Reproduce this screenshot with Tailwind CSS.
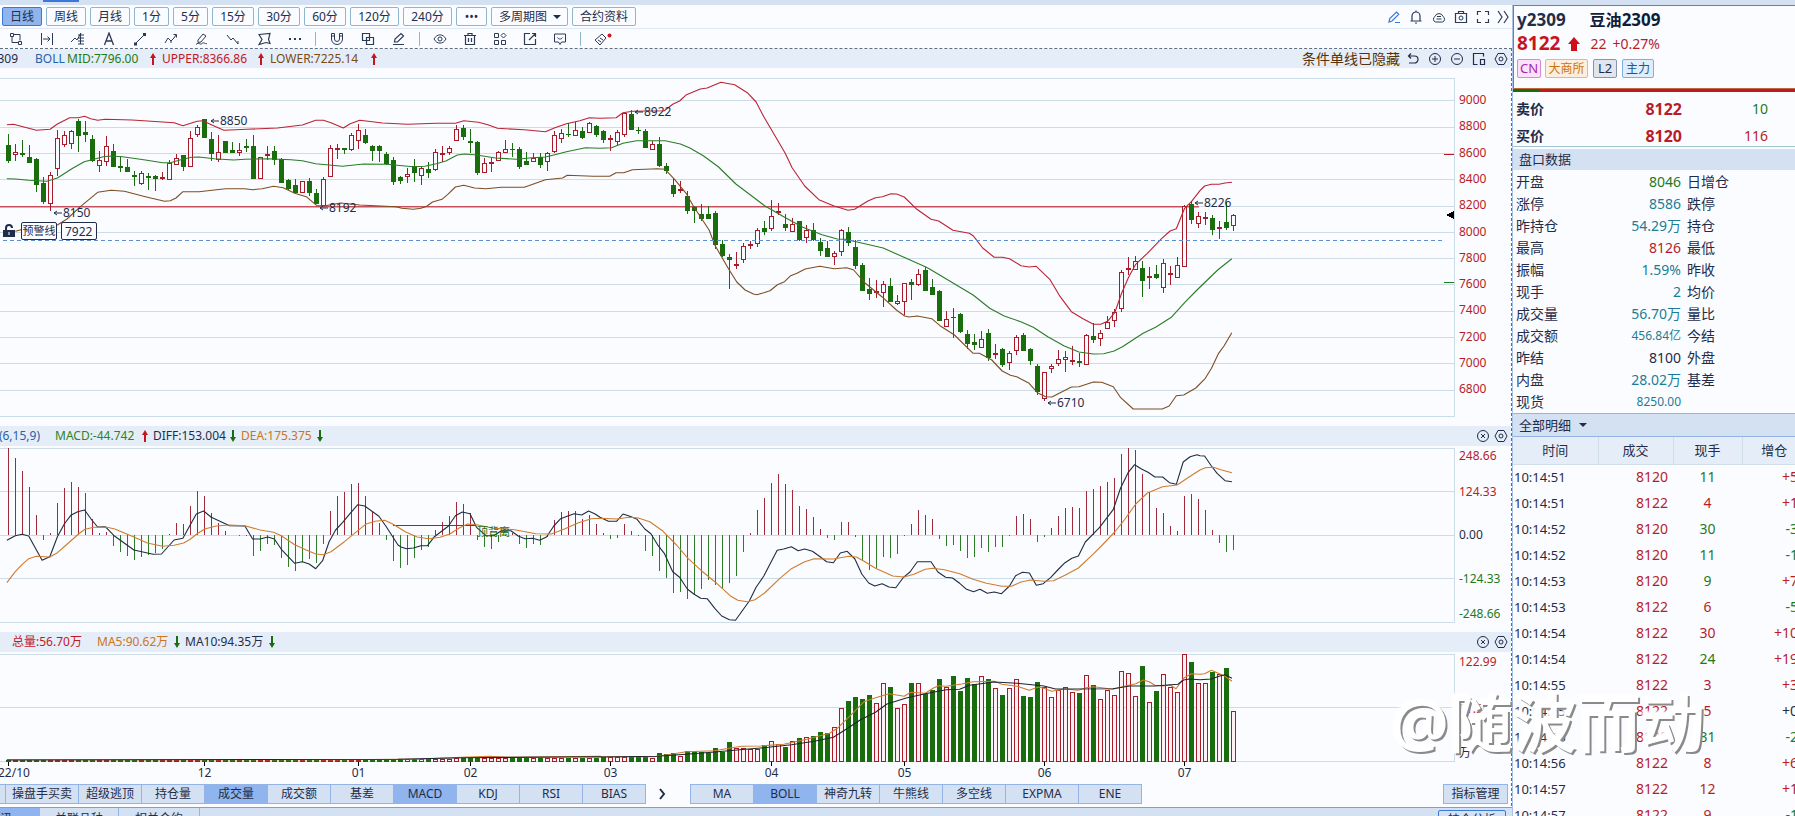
<!DOCTYPE html>
<html lang="zh-CN">
<head>
<meta charset="utf-8">
<title>豆油2309</title>
<script src="https://cdn.jsdelivr.net/npm/@tailwindcss/browser@4"></script>
</head>
<body class="h-screen overflow-hidden bg-[#fbfcff] font-['Noto_Sans','Noto_Sans_CJK_SC',sans-serif] text-xs text-[#1f2d4a]">
<svg class="hidden">
  <symbol id="up" viewBox="0 0 6 12"><path d="M3 0 6 5H4v7H2V5H0z" fill="#c8141e"/></symbol>
  <symbol id="down" viewBox="0 0 6 12"><path d="M3 12 6 7H4V0H2v7H0z" fill="#1a6d0d"/></symbol>
  <symbol id="hex" viewBox="0 0 14 14"><path d="M4 1.500h6L13 7l-3 5.500H4L1 7z"/><circle cx="7" cy="7" r="2"/></symbol>
  <symbol id="close" viewBox="0 0 14 14"><circle cx="7" cy="7" r="5.500"/><path d="m5 5 4 4m0-4-4 4"/></symbol>
</svg>
<div class="flex h-full flex-col">
  <div class="h-[5px] shrink-0 bg-[#d3e1f2] pl-[43px]"><div class="h-[2px] w-9 bg-[#3b78d8]"></div></div>
  <div class="flex min-h-0 flex-1">
    <main class="flex min-w-0 flex-1 flex-col">
      <div class="flex h-6 shrink-0 items-center justify-between border-b border-[#dfe9f5] pl-0.5">
        <nav id="periods" class="flex gap-1"></nav>
        <div class="flex text-[#2b3a55]">
          <button class="flex w-[22px] justify-center text-[#3b78d8]" aria-label="画线"><svg class="size-3.5 fill-none stroke-current" viewBox="0 0 14 14"><path d="m2 12 .8-3.500L9.500 2l2.300 2.300L5 11zM8 12.500h5" stroke-width="1.200"/></svg></button>
          <button class="flex w-[22px] justify-center" aria-label="提醒"><svg class="size-3.5 fill-none stroke-current" viewBox="0 0 14 14"><path d="M1.500 11h11M3 11V6a4 4 0 0 1 8 0v5M6 13h2M7 2V.5" stroke-width="1.200"/></svg></button>
          <button class="flex w-[23px] justify-center" aria-label="云"><svg class="size-3.5 fill-none stroke-current" viewBox="0 0 14 14"><path d="M3.500 12a3 3 0 0 1-.5-5.500 4.200 4.200 0 0 1 8 0 3 3 0 0 1-.5 5.500zM5 6.500h4M4.500 9h5"/></svg></button>
          <button class="flex w-[22px] justify-center" aria-label="截图"><svg class="size-3.5 fill-none stroke-current" viewBox="0 0 14 14"><path d="M1.500 3.500h11v9h-11zM4.500 3.500v-2h5v2" stroke-width="1.200"/><circle cx="7" cy="8" r="2"/></svg></button>
          <button class="flex w-[22px] justify-center" aria-label="全屏"><svg class="size-3.5 fill-none stroke-current" viewBox="0 0 14 14"><path d="M1.500 5V1.500H5M9 1.500h3.500V5M12.500 9v3.500H9M5 12.500H1.500V9" stroke-width="1.200"/></svg></button>
          <button class="flex w-[18px] justify-center" aria-label="展开"><svg class="size-3.5 fill-none stroke-current" viewBox="0 0 14 14"><path d="m2 1 4 6-4 6M8 1l4 6-4 6" stroke-width="1.200"/></svg></button>
        </div>
      </div>
      <div id="tools" class="flex h-[19px] shrink-0 items-center text-[#2b3a55]"></div>
      <div class="flex min-h-0 flex-1 flex-col border-t border-r border-dashed border-[#5f6f82]">
        <div class="flex h-[19px] shrink-0 items-center bg-[#e5edf8]">
          <span class="flex w-[18px] justify-end overflow-hidden">y2309</span>
          <span class="ml-[17px] w-8 text-[#2b5fa8]">BOLL</span>
          <span class="w-[83px] text-[#1f7a1a]">MID:7796.00</span>
          <svg class="h-3 w-1.5"><use href="#up"/></svg>
          <span class="ml-1.5 w-[96px] text-[#c01824]">UPPER:8366.86</span>
          <svg class="h-3 w-1.5"><use href="#up"/></svg>
          <span class="ml-1.5 w-[101px] text-[#7a4a14]">LOWER:7225.14</span>
          <svg class="h-3 w-1.5"><use href="#up"/></svg>
          <span class="ml-auto mr-0.5 text-sm leading-none text-[#5a3208]">条件单线已隐藏</span>
          <button class="flex w-[22px] justify-center" aria-label="撤销"><svg class="size-3.5 fill-none stroke-current" viewBox="0 0 14 14"><path d="M5 1.500 2.500 4 5 6.500M2.500 4h6a3.500 3.500 0 0 1 0 7H3" stroke-width="1.200"/></svg></button>
          <button class="flex w-[22px] justify-center" aria-label="放大"><svg class="size-3.5 fill-none stroke-current" viewBox="0 0 14 14"><circle cx="7" cy="7" r="5.500"/><path d="M4 7h6M7 4v6"/></svg></button>
          <button class="flex w-[22px] justify-center" aria-label="缩小"><svg class="size-3.5 fill-none stroke-current" viewBox="0 0 14 14"><circle cx="7" cy="7" r="5.500"/><path d="M4 7h6"/></svg></button>
          <button class="flex w-[22px] justify-center" aria-label="窗口"><svg class="size-3.5 fill-none stroke-current" viewBox="0 0 14 14"><path d="M5.500 12.500h-4v-11h10v3M8.500 7.500h4v5h-4z" stroke-width="1.200"/></svg></button>
          <button class="flex w-[21px] justify-center" aria-label="设置"><svg class="size-3.5 fill-none stroke-current"><use href="#hex"/></svg></button>
        </div>
        <div class="relative flex h-[358px] shrink-0">
          <svg id="price" class="h-full min-w-0 flex-1 border-0"></svg>
          <svg id="priceAxis" class="h-full w-[56px]"></svg>
          <div class="absolute left-[3px] top-[154px] flex h-[18px] items-center text-[11px]">
            <svg class="h-[14px] w-[18px]" viewBox="0 0 18 14"><path d="M0 6h12v7H0z" fill="#1f2d4a"/><path d="M3 6V4a3 3 0 0 1 6 0" fill="none" stroke="#1f2d4a" stroke-width="2"/><path d="M5.500 8h1v3h-1z" fill="#fff"/></svg>
            <label for="warn" class="h-full w-[36px] rounded-xs border border-[#1f2d4a] bg-[#fbfcff] text-center leading-4 whitespace-nowrap">预警线</label>
            <input id="warn" value="7922" class="ml-1 h-full w-9 rounded-xs border border-[#1f2d4a] bg-[#fbfcff] px-[3px] text-xs">
          </div>
        </div>
        <div class="flex h-5 shrink-0 items-center bg-[#e5edf8]">
          <span class="flex w-10 justify-end overflow-hidden whitespace-nowrap text-[#2b5fa8]">MACD(6,15,9)</span>
          <span class="ml-[15px] w-[87px] text-[#2d8428]">MACD:-44.742</span>
          <svg class="h-3 w-1.5"><use href="#up"/></svg>
          <span class="ml-[5px] w-[77px]">DIFF:153.004</span>
          <svg class="h-3 w-1.5"><use href="#down"/></svg>
          <span class="ml-[5px] w-[76px] text-[#cd7420]">DEA:175.375</span>
          <svg class="h-3 w-1.5"><use href="#down"/></svg>
          <button class="ml-auto flex w-[18px] justify-center" aria-label="关闭"><svg class="size-3.5 fill-none stroke-current"><use href="#close"/></svg></button>
          <button class="mr-px flex w-[18px] justify-center" aria-label="设置"><svg class="size-3.5 fill-none stroke-current"><use href="#hex"/></svg></button>
        </div>
        <div class="flex h-[186px] shrink-0"><svg id="macd" class="h-full min-w-0 flex-1"></svg><svg id="macdAxis" class="h-full w-[56px]"></svg></div>
        <div class="flex h-5 shrink-0 items-center bg-[#e5edf8] pl-3">
          <span class="w-[85px] text-[#c01824]">总量:56.70万</span>
          <span class="w-[77px] text-[#cd7420]">MA5:90.62万</span>
          <svg class="h-3 w-1.5"><use href="#down"/></svg>
          <span class="ml-[5px] w-[84px]">MA10:94.35万</span>
          <svg class="h-3 w-1.5"><use href="#down"/></svg>
          <button class="ml-auto flex w-[18px] justify-center" aria-label="关闭"><svg class="size-3.5 fill-none stroke-current"><use href="#close"/></svg></button>
          <button class="mr-px flex w-[18px] justify-center" aria-label="设置"><svg class="size-3.5 fill-none stroke-current"><use href="#hex"/></svg></button>
        </div>
        <div class="flex h-[132px] shrink-0"><svg id="vol" class="h-full min-w-0 flex-1"></svg><svg id="volAxis" class="h-full w-[56px]"></svg></div>
        <div class="flex h-5 shrink-0 items-stretch pr-[3px]">
          <div id="tabs1" class="flex border-y border-r border-[#93b4e4]"></div>
          <button class="flex w-11 items-center pl-[11px]" aria-label="更多"><svg class="size-3 fill-none stroke-current stroke-2" viewBox="0 0 12 12"><path d="m3 1 4 5-4 5"/></svg></button>
          <div id="tabs2" class="flex border-y border-r border-[#93b4e4]"></div>
          <button class="ml-auto w-[65px] border border-[#93b4e4] bg-[#d3e1f2] leading-none">指标管理</button>
        </div>
      </div>
      <div class="mt-px flex h-[9px] shrink-0 overflow-hidden border-t border-[#7d9fd6] bg-[#d3e1f2]">
        <div class="flex h-[22px] flex-1 items-stretch">
          <button class="flex w-10 items-center justify-start bg-[#8fb4ee] leading-none"><span class="flex w-3 justify-end overflow-hidden whitespace-nowrap">资讯</span></button>
          <button class="w-[79px] border-r border-[#93b4e4]">关联品种</button>
          <button class="w-[81px] border-r border-[#93b4e4]">相关合约</button>
          <button class="ml-auto mr-1.5 mt-0.5 w-[68px] rounded-xs border border-[#3b78d8] leading-none">持仓分析</button>
        </div>
      </div>
    </main>
    <aside class="w-[283px] shrink-0 overflow-hidden border-l border-[#a9c3e4] text-sm">
      <div class="h-[84px] border-2 border-r-0 border-t border-l border-b border-[#c4683c] px-[3px]">
        <div class="flex h-7 items-center gap-6 text-[17px] font-bold"><span>y2309</span><span class="text-[#101c38]"><span class="text-base">豆油</span>2309</span></div>
        <div class="flex h-5 items-center text-[#b81c28]"><b class="text-[19px] text-[#c8141e]">8122</b><svg class="ml-2 mr-2.5 h-4 w-3" viewBox="0 0 12 16"><path d="m6 1 6 7H9v7H3V8H0z" fill="#d01018"/></svg><span>22</span><span class="ml-1.5">+0.27%</span></div>
        <div class="mt-[5px] flex gap-1 text-[13px] leading-none">
          <span class="grid h-[19px] w-6 place-items-center rounded-xs border border-[#d48ad4] bg-[#fbe2fa] text-[#a828a8]">CN</span>
          <span class="grid h-[19px] w-[43px] place-items-center rounded-xs border border-[#e4b888] bg-[#fdeedd] text-xs text-[#c87410]">大商所</span>
          <span class="ml-px grid h-[19px] w-6 place-items-center rounded-xs border border-[#8a94a4] bg-[#e0e5ee]">L2</span>
          <span class="ml-px grid h-[19px] w-8 place-items-center rounded-xs border border-[#7faee0] bg-[#e0edfb] text-xs text-[#1858a0]">主力</span>
        </div>
      </div>
      <div class="flex h-[3px]"><div class="w-[27px] bg-[#1a6d0d]"></div><div class="flex-1 bg-[#b81c28]"></div></div>
      <div class="h-[55px] border-b border-[#a0c4d0] pl-[3px] pt-[3px]">
        <div class="grid h-[27px] grid-cols-[166px_86px] items-center text-right"><span class="flex items-center justify-between font-bold"><span>卖价</span><span class="text-base text-[#b81c28]">8122</span></span><span class="text-[#1f7a1a]">10</span></div>
        <div class="grid h-[27px] grid-cols-[166px_86px] items-center text-right"><span class="flex items-center justify-between font-bold"><span>买价</span><span class="text-base text-[#b81c28]">8120</span></span><span class="text-[#b81c28]">116</span></div>
      </div>
      <div class="mt-0.5 mb-px h-[21px] bg-[#d3e1f2] pl-1.5 text-[13px] leading-[21px]">盘口数据</div>
      <table class="w-full table-fixed"><tbody id="quotes"></tbody></table>
      <div class="relative flex h-6 items-center border-y border-[#93b4e4] bg-[#d3e1f2] pl-1.5 text-[13px]">
        <select aria-label="明细" class="w-[72px] appearance-none bg-transparent"><option>全部明细</option></select>
        <svg class="pointer-events-none absolute left-[66px] h-1 w-2" viewBox="0 0 8 4"><path d="M0 0h8L4 4z" fill="#1f2d4a"/></svg>
      </div>
      <table class="w-[293px] table-fixed">
        <thead><tr class="h-[27px] border-b border-[#d0dfea] bg-[#e5edf8] text-[13px]"><th class="w-[85px] border-r border-[#d0dfea] font-normal">时间</th><th class="w-[75px] border-r border-[#d0dfea] font-normal">成交</th><th class="w-[69px] border-r border-[#d0dfea] font-normal">现手</th><th class="w-16 font-normal">增仓</th></tr></thead>
        <tbody id="ticks"></tbody>
      </table>
    </aside>
  </div>
</div>
<div class="pointer-events-none absolute right-[90px] top-[687px] text-[64px] leading-[72px] font-medium text-white [text-shadow:2px_2px_0_#8a8a8a,-1px_-1px_2px_#fff,-2px_-2px_3px_#fff]">@随波而动</div>

<script>
const $ = id => document.getElementById(id);
const RED = '#a81c2a', GREEN = '#1a6d0d';

// Period buttons: label, width class
const on = 'border-[#3b78d8] bg-[#8fb4ee]', off = 'border-[#8fb6cc] bg-[#fbfcff]';
$('periods').innerHTML = [['日线','w-10'],['周线','w-10'],['月线','w-10'],['1分','w-[35px]'],['5分','w-[35px]'],['15分','w-[42px]'],['30分','w-[42px]'],['60分','w-[42px]'],['120分','w-[49px]'],['240分','w-[49px]'],['•••','w-[31px]']]
  .map(([t, w], i) => `<button class="h-[19px] rounded-xs border leading-none ${w} ${i ? off : on}">${t}</button>`).join('')
  + `<span class="relative flex items-center"><select aria-label="多周期图" class="h-[19px] w-[77px] appearance-none rounded-xs border border-[#8fb6cc] bg-[#fbfcff] pl-[7px] leading-none"><option>多周期图</option></select><svg class="pointer-events-none absolute right-[7px] h-1 w-2" viewBox="0 0 8 4"><path d="M0 0h8L4 4z" fill="#1f2d4a"/></svg></span>`
  + `<button class="h-[19px] w-16 rounded-xs border border-[#8fb6cc] leading-none">合约资料</button>`;

// Drawing tools
const icon = (w, name, d) => `<button class="flex ${w} justify-center" aria-label="${name}"><svg class="size-3.5 fill-none stroke-current" viewBox="0 0 14 14">${d}</svg></button>`;
const sep = '<span class="mx-[5px] h-3.5 w-px bg-[#8fb6cc]"></span>';
const W = 'w-[31px]', V = 'w-[30px]';
$('tools').innerHTML =
  icon(W,'选择','<path d="M3 4.500v6h6M5 2.500h6v6M1.500 1.500h3v3h-3zM9.500 9.500h3v3h-3z"/>') +
  icon(W,'区间','<path d="M1.500 1v12M12.500 1v12M3 7h7M7.500 4.500 10 7 7.500 9.500"/>') +
  icon(W,'标尺','<path d="m0 10 4-4 2 2 4-7M7 3h6M7 6h6M7 9h6M7 12h6M9.500 1v11"/>') +
  icon(W,'文字','<path d="m2.500 13 4.500-12 4.500 12M4 9h6" stroke-width="1.300"/>') +
  icon(W,'线段','<path d="m3 11 8-8"/><path d="M1 10.500h3v3H1zM10 1h3v3h-3z" fill="currentColor" stroke="none"/>') +
  icon(W,'折线','<path d="m1 11 3-5 3 3 3-3 2-3M12.500 2.500v3M12.500 2.500h-3M7 9v2"/>') +
  icon(W,'画笔','<path d="m3 8 5-6 3 2-5 6-3 .500zM1 12.500c3-3 4 1 6-1s3 1 5 0"/>') +
  icon(W,'波浪','<path d="m1 3 4 5 2-2 5 6M12 9v3"/>') +
  icon(W,'形状','<path d="m2 2.500 11-1-1.500 6 1.500 4-4-1-7 2 3-5z" stroke-width="1.200"/>') +
  icon(W,'更多','<path d="M1 7h2m3 0h2m3 0h2" stroke-width="2"/>') + sep +
  icon(W,'磁铁','<path d="M1.500 1.500h3V7a2.500 2.500 0 0 0 5 0V1.500h3V7a5.500 5.500 0 0 1-11 0zM1.500 4h3M9.500 4h3"/>') +
  icon(W,'复制','<path d="M1.500 1.500h7v7h-7zM5.500 5.500h7v7h-7z" stroke-width="1.200"/>') +
  icon(W,'编辑','<path d="m2.500 10 .5-3 6-5.500 2.500 2.500L5.500 10zM1 12.500h11" stroke-width="1.200"/>') + sep +
  icon(V,'显示','<path d="M1 7c3-5.500 9-5.500 12 0-3 5.500-9 5.500-12 0z"/><circle cx="7" cy="7" r="2"/>') +
  icon(V,'删除','<path d="M1 3.500h12M5 3V1.500h4V3M2.500 3.500v9h9v-9M5.500 6v4M8.500 6v4" stroke-width="1.200"/>') +
  icon(V,'组件','<path d="M1.500 1.500h4v4h-4zM1.500 8.500h4v4h-4zM8.500 8.500h4v4h-4zM10.500 1l2.500 2.500L10.500 6 8 3.500z"/>') +
  icon(V,'导出','<path d="M7 1.500H1.500v11h11V7M6 8l6-6M9 1.500h3.500V5" stroke-width="1.200"/>') +
  icon(V,'评论','<path d="M1.500 2h11v8h-4L7 12.500 5.500 10h-4zM4.500 5.500c1 2 4 2 5 0"/>') + sep +
  `<button class="flex w-[34px] justify-center" aria-label="标签"><svg class="h-3.5 w-[18px] fill-none stroke-current" viewBox="0 0 18 14"><path d="m1 8 7-6 4 4-6 7zM4 8l3 2M6 6l3 2"/><circle cx="15.500" cy="3.500" r="2" fill="#d01824" stroke="none"/></svg></button>`;

// Indicator tabs
const tab = (t, w, act) => `<button class="${w} border-l border-[#93b4e4] leading-none ${act ? 'bg-[#8fb4ee]' : 'bg-[#d3e1f2]'}">${t}</button>`;
$('tabs1').innerHTML = '<span class="w-[5px] bg-[#d3e1f2]"></span>' + ['操盘手买卖','超级逃顶','持仓量','成交量','成交额','基差','MACD','KDJ','RSI','BIAS']
  .map((t, i) => tab(t, i ? 'w-[63px]' : 'w-[73px]', i == 3 || i == 6)).join('');
$('tabs2').innerHTML = ['MA','BOLL','神奇九转','牛熊线','多空线','EXPMA','ENE'].map((t, i) => tab(t, i == 5 ? 'w-[73px]' : 'w-[63px]', i == 1)).join('');

// Quote panel
const T = 'text-[#1c7c94]', R = 'text-[#b81c28]', G = 'text-[#1f7a1a]';
$('quotes').innerHTML = [['开盘','8046',G,'日增仓'],['涨停','8586',T,'跌停'],['昨持仓','54.29万',T,'持仓'],['最高','8126',R,'最低'],['振幅','1.59%',T,'昨收'],['现手','2',T,'均价'],['成交量','56.70万',T,'量比'],['成交额','456.84亿',T+' text-xs','今结'],['昨结','8100','','外盘'],['内盘','28.02万',T,'基差'],['现货','8250.00',T+' text-xs','']]
  .map(([a, v, c, b]) => `<tr class="h-[22px] leading-5"><th class="w-16 pl-[3px] text-left font-normal">${a}</th><td class="w-[104px] text-right ${c}">${v}</td><td class="pl-1.5">${b}</td></tr>`).join('');
$('ticks').innerHTML = [['51',8120,11,G,'+5'],['51',8122,4,R,'+1'],['52',8120,30,G,'-3'],['52',8120,11,G,'-1'],['53',8120,9,G,'+7'],['53',8122,6,R,'-5'],['54',8122,30,R,'+10'],['54',8122,24,G,'+19'],['55',8122,3,R,'+3'],['55',8122,5,R,'+0'],['56',8120,31,G,'-2'],['56',8122,8,R,'+6'],['57',8122,12,R,'+1'],['57',8122,9,R,'-1']]
  .map(([s, p, q, c, d]) => `<tr class="h-[26px] leading-5"><td class="pl-px text-[13px]">10:14:${s}</td><td class="pr-[5px] text-right text-[#b81c28]">${p}</td><td class="text-center ${c}">${q}</td><td class="pr-2 text-right ${d == '+0' ? '' : d[0] == '+' ? R : G}">${d}</td></tr>`).join('');

// Candles: colour, high, body top, body bottom, low, in thirds of a pixel
const K = `g403,435,482,490 r432,457,466,482 g420,458,464,472 g436,471,488,488 g474,476,556,575 g530,549,605,613 r515,526,613,632 r390,415,508,528 r394,406,436,440 r390,394,433,447
g358,362,408,455 g364,396,404,425 g406,417,483,485 r453,479,497,515 r408,438,487,498 g432,453,500,502 g469,498,503,516 g478,502,515,515 g513,525,530,558 r514,520,551,555
g520,529,533,570 g525,527,536,572 r515,531,537,541 r481,490,541,541 r462,473,496,496 g465,465,502,512 r394,415,501,501 r376,382,404,412 g357,357,413,415 g396,417,461,482
r405,455,479,486 g423,423,459,459 g427,450,460,460 r430,449,460,467 g417,438,443,457 g405,438,536,538 r470,472,536,538 r439,463,468,479 g439,453,481,496 g475,477,548,550
g536,539,568,570 g538,554,580,582 r544,544,580,580 g534,544,578,588 g567,579,611,613 r532,538,618,618 r434,445,530,532 r433,444,447,476 g444,444,449,463 r399,406,450,452
r373,391,422,447 g387,405,429,431 g434,438,453,483 g435,438,453,487 g456,462,493,495 g470,481,545,556 g528,531,543,551 r505,523,532,548 g478,498,518,545 r498,504,529,556
g486,508,518,535 r446,457,511,513 r439,459,464,485 r438,444,458,466 r375,388,422,422 g375,384,410,421 g388,422,430,460 g424,426,518,524 r475,489,518,520 r475,485,489,516
r452,457,482,484 r420,446,458,458 g430,447,450,470 g440,446,500,507 g457,484,495,495 r460,474,485,485 g459,471,495,503 r455,459,487,514 r393,406,457,459 r388,399,418,430
g370,401,404,412 r367,389,408,408 g382,393,413,418 r365,370,398,400 g375,377,404,410 g390,393,420,430 r405,414,420,452 r390,397,427,435 r336,338,404,410 g330,342,389,391
g380,389,393,402 g387,393,443,445 r422,432,449,449 g411,432,497,501 g490,499,513,523 g535,555,582,591 r543,566,572,579 g574,588,633,642 g618,621,633,670 g612,642,657,664
g618,642,656,656 g634,639,735,746 g720,732,768,770 g762,771,780,866 r755,792,795,808 r730,739,779,788 r722,732,735,747 r684,691,732,740 g663,684,696,705 r601,649,687,692
r609,633,638,645 g642,672,684,693 r654,673,696,696 g663,663,720,722 r676,690,713,730 g669,691,720,722 g714,726,753,767 g723,744,771,771 r754,760,770,794 r687,691,756,768
g682,696,729,738 g720,741,798,806 g789,795,872,872 g834,868,882,900 r840,874,878,893 r843,853,878,920 g834,858,905,905 r885,904,911,915 r849,850,905,945 g838,846,854,900
r808,823,854,858 g802,811,872,872 g836,861,884,884 g870,873,962,962 r933,958,982,982 g924,950,954,1013 g940,942,996,998 g991,1002,1031,1048 g1002,1026,1035,1050 r993,1018,1043,1043
g988,1000,1073,1082 r1032,1059,1066,1078 g1044,1047,1095,1100 r1054,1059,1090,1110 r1005,1011,1052,1064 g999,1005,1052,1052 g1045,1048,1082,1095 g1093,1098,1175,1184 r1115,1117,1196,1202 r1093,1099,1108,1119
r1050,1077,1091,1098 r1053,1072,1079,1115 r1038,1080,1085,1096 g1060,1084,1088,1100 r1002,1006,1094,1094 g970,1007,1019,1028 r991,1000,1016,1037 r948,967,988,988 r927,937,964,980 r810,817,926,936
r772,804,811,826 r768,783,809,809 g783,804,842,891 r802,827,833,866 g795,822,833,838 r777,790,863,878 r798,819,823,854 r771,796,833,833 r616,617,800,800 g603,612,660,673
r636,648,671,685 r636,651,655,676 g644,654,690,704 r662,681,686,717 g607,666,684,690 r642,646,677,693`.split(/\s+/).map(s => [s[0], ...s.slice(1).split(',').map(v => v / 3)]);
const X = i => 8.5 + 7 * i;
const px = v => Math.round(v);
const rect = (x, y, w, h, fill, stroke) => `<rect x="${x}" y="${y}" width="${w}" height="${h}" fill="${fill}"${stroke ? ` stroke="${stroke}"` : ''}/>`;
const hline = (y, c = '#cddde8', x2 = '100%', more = '') => `<line x1="0" x2="${x2}" y1="${y}" y2="${y}" stroke="${c}" ${more}/>`;
const vline = (x, a, b, c) => `<line x1="${x}" x2="${x}" y1="${a}" y2="${b}" stroke="${c}"/>`;
const body = (i, t, b, red, fill) => red ? rect(X(i) - 2, px(t) + .5, 4, Math.max(1, px(b) - px(t) - 1), fill, RED) : rect(X(i) - 2.5, px(t), 5, Math.max(1, px(b) - px(t)), GREEN);
const text = (x, y, s, c, size = 12, more = '') => `<text x="${x}" y="${y}" dy=".36em" fill="${c}" font-size="${size}" ${more}>${s}</text>`;

// Curves are stored in strips, each with its own origin and horizontal scale
const strips = { a: [0, 2.613], b: [600, 2.613], c: [600, 2.412], d: [1200, 2.635] };
function curve(color, parts, top = 0, topC = 190) {
  const p = parts.map(([k, s]) => s.split(' ').map(q => {
    const [x, y] = q.split(','), [o, f] = strips[k];
    return (o + x / f).toFixed(1) + ',' + ((k == 'c' ? topC : top) + y / 3).toFixed(1);
  }).join(' ')).join(' ');
  return `<polyline points="${p}" fill="none" stroke="${color}" stroke-width="1.100" stroke-linejoin="round"/>`;
}
const note = (x, y, s) => `<path d="M${x + 9} ${y}h-8m3-2-3 2 3 2" fill="none" stroke="#1f2d4a"/>` + text(x + 10, y, s, '#1f2d4a');

// Main chart
let s = '<g transform="translate(0,-68)"><g shape-rendering="crispEdges">';
s += hline(78.5) + hline(416.5);
for (let i = 0; i < 12; i++) s += hline(px(100.300 + 26.300 * i) + .5);
s += hline(206.5, '#c8505c', 1199) + hline(207.5, '#e0a8b0', 1199);
s += '<svg x="100%" overflow="visible">' + vline(-.5, 78, 417, '#cddde8') + '<path d="M-11 154.500h10" stroke="#b81c28"/><path d="M-11 282.500h10" stroke="#1f7a1a"/><path d="M-9 215l8-4v8z" fill="#000"/></svg>';
K.forEach(([c, h, t, b, l], i) => {
  const red = c == 'r', col = red ? RED : GREEN;
  s += vline(X(i), px(h), px(t), col) + vline(X(i), px(b), px(l), col) + body(i, t, b, red, '#fbfcff');
});
s += '</g>' + curve('#bb2433', [
  ['a','18,374 35,373 95,391 131,388 150,372 182,353 204,353 221,349 237,356 255,361 275,358 345,360 455,368 478,377 515,364 530,362 552,374 585,391 645,388 725,384 790,375 825,361 845,361 865,368 897,384 915,371 940,361 1000,369 1065,373 1140,370 1190,370 1212,362 1250,367 1275,374 1300,385 1370,389 1425,395 1450,383 1480,371 1515,362 1540,353'],
  ['b','0,355 42,353 60,338 85,334 168,332 190,313 208,303 226,284 262,267 280,264 316,247 352,254 385,278 408,306 428,350 450,393 484,460 502,503 535,558 572,599 610,617 648,631 665,628 700,603 720,593 738,590 760,581 775,582 795,591 828,628 865,658 885,663 922,691 965,700 975,707 1000,744 1030,772 1052,772 1070,776 1100,797'],
  ['c','1035,231 1052,229 1085,268 1110,320 1137,365 1165,386 1190,403 1208,403 1224,394 1242,367 1258,310 1275,262 1292,223 1320,190 1355,145 1375,123 1390,116 1410,55 1427,34'],
  ['d','0,572 12,558 30,553 50,553 66,549 84,547']]);
s += curve('#2a7d25', [
  ['a','18,536 40,537 75,541 122,544 150,534 190,505 220,485 245,478 270,470 290,468 320,470 380,480 425,488 445,488 470,480 500,472 520,471 560,476 610,480 640,478 700,476 760,479 790,482 825,491 895,499 950,492 1010,493 1080,500 1110,499 1140,491 1165,483 1195,465 1215,462 1245,465 1295,474 1350,478 1390,473 1425,471 1450,464 1480,455 1530,443'],
  ['b','0,445 30,443 60,430 95,422 170,422 210,432 235,444 270,467 310,501 355,552 430,617 480,650 530,682 580,704 620,717 640,718 675,727 740,744 800,775 850,800'],
  ['c','795,237 900,315 940,355 975,378 1015,395 1045,412 1080,440 1120,468 1155,486 1190,492 1215,491 1240,483 1260,470 1310,430 1340,412 1378,382 1410,338 1440,300 1490,240 1524,206']]);
s += curve('#7d4e22', [
  ['a','40,694 60,688 95,690 150,675 175,657 210,620 255,577 290,571 325,574 380,590 430,604 445,602 460,594 478,575 520,575 560,570 590,566 640,566 660,569 685,566 715,559 740,563 770,580 800,590 828,617 850,617 890,609 940,615 1035,620 1050,625 1080,628 1100,625 1115,619 1130,606 1155,598 1170,583 1190,561 1212,556 1240,564 1270,566 1310,562 1370,562 1385,556 1425,539 1470,534 1482,526 1550,529'],
  ['b','0,529 25,529 42,518 62,518 85,509 150,506 170,508 195,538 225,580 245,620 285,690 300,735 335,805'],
  ['c','312,241 330,276 350,300 370,312 378,314 395,308 410,302 428,284 445,275 460,257 475,250 495,237 530,229 565,236 595,233 612,240 640,280 680,320 715,360 735,378 745,381 765,378 800,386 820,407 855,435 900,490 915,490 945,510 970,543 990,556 1005,560 1035,580 1055,608 1075,620 1090,621 1110,608 1137,591 1155,590 1190,576 1210,577 1238,590 1256,623 1286,657 1356,657 1373,648 1390,617 1408,615 1437,594 1460,565 1475,535 1492,490 1505,468 1524,428']]);
s += '<svg width="100%" x="-10" overflow="visible"><line x1="13" x2="100%" y1="240.500" y2="240.500" stroke="#5b8fd0" stroke-dasharray="4 3" shape-rendering="crispEdges" stroke-width="1"/></svg>';
s += note(210, 121, 8850) + note(53, 213, 8150) + note(319, 208, 8192) + note(634, 112, 8922) + note(1194, 203, 8226) + note(1047, 403, 6710) + '</g>';
$('price').innerHTML = s;
$('priceAxis').innerHTML = [9000,8800,8600,8400,8200,8000,7800,7600,7400,7200,7000,6800].map((v, i) => text(4, px(32 + 26.300 * i), v, '#b81c28')).join('');

// MACD
const M = [84,114,153,201,285,360,339,249,204,186,201,219,297,339,336,378,396,408,420,410,404,399,387,342,309,312,258,213,228,279,309,333,344,347,348,408,393,372,374,414,441,453,426,417,429,372,273,228,216,192,189,228,273,309,360,423,444,435,414,390,381,330,306,288,246,252,279,360,381,387,366,348,339,372,384,372,375,352,300,276,273,273,297,285,312,
339,357,353,312,333,347,393,408,453,474,519,516,537,522,507,480,495,504,489,468,396,339,270,234,189,162,192,210,258,267,291,327,354,360,306,306,351,423,450,444,411,414,402,347,312,270,285,297,357,378,375,393,414,411,384,396,381,381,347,288,282,297,366,351,324,288,264,261,264,213,207,198,186,174,102,84,90,162,216,264,279,318,333,228,222,237,270,330,369,396,390];
s = '<g transform="translate(0,-446)"><g shape-rendering="crispEdges">' + [448.5,491.5,535.5,578.5,622.5].map(y => hline(y)).join('') + '<svg x="100%" overflow="visible">' + vline(-.5, 448, 623, '#cddde8') + '</svg>';
M.forEach((v, i) => s += vline(X(i), v < 346 ? px(420 + v / 3) : 535, v < 346 ? 535 : px(420 + v / 3), v < 346 ? '#a02a38' : '#2d7d28'));
s += '<path d="M393 525.500h82" stroke="#1a6d0d"/></g>';
s += curve('#1f2d40', [
  ['a','18,361 40,347 58,343 75,348 110,421 130,410 150,350 168,312 185,286 203,275 221,270 240,300 255,321 275,320 300,349 350,390 400,403 422,402 455,360 478,355 497,315 513,282 532,273 552,292 600,317 640,318 660,357 680,357 700,351 717,357 735,388 770,430 790,425 808,432 825,446 843,422 860,365 877,330 895,308 915,280 935,254 953,258 990,289 1008,318 1040,375 1048,381 1062,386 1080,384 1100,377 1117,377 1135,350 1172,318 1190,287 1208,276 1228,281 1245,322 1270,347 1290,347 1310,332 1335,332 1355,349 1372,356 1392,355 1410,361 1428,351 1447,318 1465,296 1482,289 1500,281 1520,285 1538,273 1555,282'],
  ['b','0,292 22,304 43,304 60,282 78,289 97,298 117,327 133,341 152,377 168,400 190,455 208,472 228,507 245,522 263,535 280,536 300,565 318,588 338,599 354,601 390,543 408,502 428,468 463,391 480,387 500,380 518,392 535,387 555,394 575,410 592,425 610,428 628,399 646,394 666,417 684,462 702,489 718,498 737,491 755,501 773,503 792,473 810,456 829,425 865,425 883,456 903,472 921,474 940,490 958,508 976,515 993,508 1012,520 1030,516 1049,521 1070,498 1086,467 1104,457 1122,459 1140,496 1158,491 1178,472 1196,450 1215,428 1233,415 1250,408 1268,366 1305,323 1341,269 1360,205 1380,158 1397,134 1415,147 1432,157 1450,171 1470,171 1488,188 1506,193 1524,126 1542,110 1560,104'],
  ['d','0,107 12,108 30,138 45,160 66,182 84,185']], 420);
s += curve('#d07c2c', [
  ['a','18,488 40,455 58,433 75,416 95,409 130,411 150,398 170,378 205,342 222,328 245,322 280,322 300,327 350,351 385,369 425,379 455,376 480,369 497,358 515,341 535,327 565,318 600,315 640,317 680,330 715,337 735,347 770,374 800,390 825,402 845,404 865,395 900,365 955,313 980,304 1005,301 1025,311 1060,336 1090,351 1120,356 1150,352 1175,342 1200,324 1222,312 1245,314 1290,325 1345,329 1400,341 1440,342 1475,327 1510,309 1545,296'],
  ['b','0,295 45,297 75,292 100,294 130,305 165,334 200,375 230,415 265,452 300,485 340,527 360,541 385,545 405,539 430,519 470,475 500,446 535,425 560,416 610,417 650,409 670,411 690,424 720,445 765,468 795,471 820,463 850,448 870,445 900,449 940,461 975,478 1010,490 1050,499 1075,499 1100,486 1125,480 1160,484 1185,482 1215,466 1250,444 1290,401 1320,366 1345,336 1370,300 1400,252 1430,219 1470,200 1508,195 1540,170'],
  ['d','0,150 14,143 35,142 55,149 84,158']], 420);
s += text(477, 532, '顶背离', '#1a6d0d', 11) + '</g>';
$('macd').innerHTML = s;
$('macdAxis').innerHTML = [[10,'248.66','#b81c28'],[46,'124.33','#b81c28'],[89,'0.00','#1f2d4a'],[133,'-124.33','#1f7a1a'],[168,'-248.66','#1f7a1a']].map(([y, t, c]) => text(4, y, t, c)).join('');

// Volume
const Q = [1012,1012,1012,1012,1012,1012,1012,1015,1000,1002,1000,1008,993,992,995,1000,984,995,966,983,983,988,987,975,962,973,980,962,954,952,948,936,938,922,865,843,831,838,825,850,790,801,865,853,790,790,822,811,777,802,768,813,774,792,769,777,805,825,805,778,828,831,786,802,832,810,802,817,819,766,795,838,811,826,754,760,829,738,847,813,763,800,817,703,726,790,790,756,761,743,874];
s = '<g transform="translate(0,-652)"><g shape-rendering="crispEdges">' + [654.5,707.5,761.5].map(y => hline(y)).join('') + '<svg x="100%" overflow="visible">' + vline(-.5, 654, 762, '#cddde8') + '</svg>';
K.forEach(([c], i) => {
  const t = i > 84 ? Q[i - 85] : i > 63 ? 1013 : i > 55 ? 1016 : 1020;
  s += body(i, 420 + t / 3, 762, c == 'r', '#fdf1f4');
});
s += [0, 28, 50, 66, 86, 109, 128, 148, 168].map(i => vline(X(i), 762, 766, '#000')).join('') + '</g>';
s += curve('#d07c2c', [
  ['a','18,1019 900,1019 1100,1017 1205,1012 1280,1009 1330,1012 1568,1009'],
  ['b','5,1010 140,1010 190,1002 225,995 300,992 340,984 370,979 420,978 480,973 540,958 600,940 620,925 660,880 690,845 712,836 755,821 795,829 812,817 850,820 870,805 885,797 905,799 945,792 975,785 1030,784 1050,793 1090,799 1122,811 1145,801 1160,805 1180,814 1215,807 1250,811 1270,803 1290,800 1340,808 1375,797 1400,791 1420,780 1435,785 1450,796 1470,798 1490,795 1505,806 1525,775 1545,761'],
  ['d','0,763 12,761 30,751 45,758 66,769 84,784']], 420);
s += curve('#1f2430', [
  ['a','18,1020 1040,1018 1210,1013 1568,1010'],
  ['b','5,1011 150,1009 225,1003 300,996 380,988 440,982 500,974 560,964 610,952 640,930 680,900 720,877 750,852 800,834 850,821 905,809 940,808 965,796 1030,786 1090,790 1160,798 1190,807 1340,806 1385,798 1450,798 1510,793 1525,780 1540,777'],
  ['d','0,779 30,777 50,769 66,764 84,775']], 420);
s += text(-2, 773, '22/10', '#1f2d4a') + [[28,'12'],[50,'01'],[66,'02'],[86,'03'],[109,'04'],[128,'05'],[148,'06'],[168,'07']].map(([i, t]) => text(X(i), 773, t, '#1f2d4a', 12, 'text-anchor="middle"')).join('') + '</g>';
$('vol').innerHTML = s;
$('volAxis').innerHTML = text(4, 10, '122.99', '#b81c28') + text(4, 57, '61.50', '#b81c28') + text(4, 101, '万', '#1f2d4a');
</script>
</body>
</html>
